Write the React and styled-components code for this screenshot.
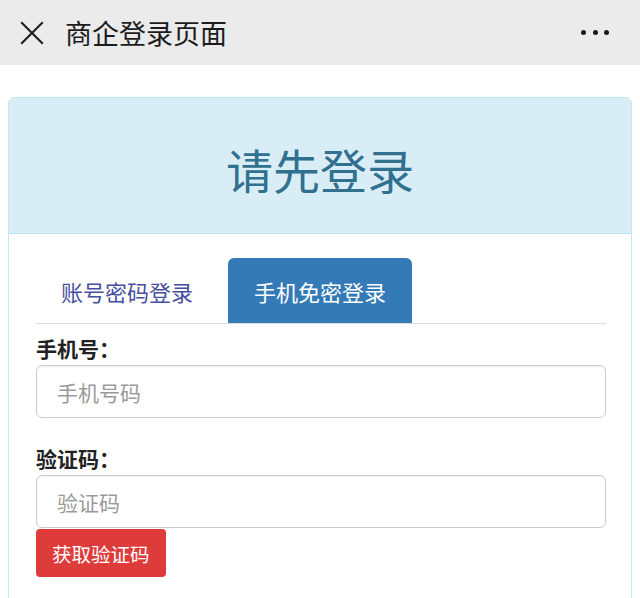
import React from "react";
import styled, { createGlobalStyle } from "styled-components";

const Global = createGlobalStyle`
  html, body { margin: 0; padding: 0; background: #fff; }
  body { font-family: "Noto Sans CJK SC", "Noto Sans", sans-serif; }
  * { box-sizing: border-box; }
`;

const TopBar = styled.header`
  height: 65px;
  background: #ebebeb;
  display: flex;
  align-items: center;
  padding: 0 20px;
`;

const CloseBtn = styled.span`
  width: 24px;
  height: 24px;
  display: flex;
  margin-right: 21px;
`;

const TopTitle = styled.h1`
  margin: 0;
  flex: 1;
  font-size: 27px;
  font-weight: 400;
  color: #1c1c1c;
  line-height: 1;
`;

const More = styled.span`
  display: flex;
  gap: 6.5px;
  margin-right: 11px;
`;

const Dot = styled.i`
  width: 5px;
  height: 5px;
  border-radius: 50%;
  background: #1a1a1a;
`;

const Page = styled.main`
  padding: 32px 8px 0;
`;

const Panel = styled.section`
  border: 1px solid #bce8f1;
  border-radius: 6px;
  overflow: hidden;
  min-height: 520px;
`;

const PanelHeading = styled.div`
  height: 136px;
  background: #d9edf7;
  border-bottom: 1px solid #bce8f1;
  display: flex;
  align-items: center;
  justify-content: center;
`;

const PanelTitle = styled.h2`
  margin: 0;
  font-size: 47px;
  font-weight: 400;
  color: #31708f;
  line-height: 1;
  padding-top: 6px;
`;

const PanelBody = styled.div`
  padding: 24px 25px 0 27px;
`;

const Tabs = styled.nav`
  display: flex;
  border-bottom: 1px solid #dddddd;
`;

const Tab = styled.div`
  height: 65px;
  display: flex;
  align-items: center;
  padding: 0 ${(p) => (p.$active ? "26px" : "25px")};
  margin-right: ${(p) => (p.$active ? 0 : "10px")};
  font-size: 22px;
  border-radius: 6px 6px 0 0;
  color: ${(p) => (p.$active ? "#ffffff" : "#464e9f")};
  background: ${(p) => (p.$active ? "#337ab7" : "transparent")};
`;

const Field = styled.div`
  margin-top: 9px;
  margin-bottom: 25px;
`;

const Label = styled.label`
  display: block;
  font-size: 21px;
  font-weight: 700;
  color: #222;
  line-height: 30px;
  margin-bottom: 2px;
`;

const Input = styled.input`
  display: block;
  width: 100%;
  height: 53px;
  border: 1px solid #cccccc;
  border-radius: 6px;
  padding: 0 20px;
  font-family: inherit;
  font-size: 21px;
  color: #333;
  box-shadow: inset 0 1px 2px rgba(0, 0, 0, 0.06);
  &::placeholder { color: #9a9a9a; }
`;

const CodeField = styled.div`
  margin-top: 0;
`;

const DangerButton = styled.button`
  margin-top: 1px;
  height: 48px;
  padding: 0 16px;
  border: none;
  border-radius: 4px;
  background: #de3b3b;
  color: #fff;
  font-family: inherit;
  font-size: 19.5px;
`;

export default function App() {
  return (
    <>
      <Global />
      <TopBar>
        <CloseBtn>
          <svg width="24" height="24" viewBox="0 0 24 24" fill="none" stroke="#222" strokeWidth="2.2" strokeLinecap="square">
            <path d="M2 2 L22 22 M22 2 L2 22" />
          </svg>
        </CloseBtn>
        <TopTitle>商企登录页面</TopTitle>
        <More>
          <Dot />
          <Dot />
          <Dot />
        </More>
      </TopBar>
      <Page>
        <Panel>
          <PanelHeading>
            <PanelTitle>请先登录</PanelTitle>
          </PanelHeading>
          <PanelBody>
            <Tabs>
              <Tab>账号密码登录</Tab>
              <Tab $active>手机免密登录</Tab>
            </Tabs>
            <Field>
              <Label>手机号：</Label>
              <Input placeholder="手机号码" />
            </Field>
            <CodeField>
              <Label>验证码：</Label>
              <Input placeholder="验证码" />
              <DangerButton>获取验证码</DangerButton>
            </CodeField>
          </PanelBody>
        </Panel>
      </Page>
    </>
  );
}
